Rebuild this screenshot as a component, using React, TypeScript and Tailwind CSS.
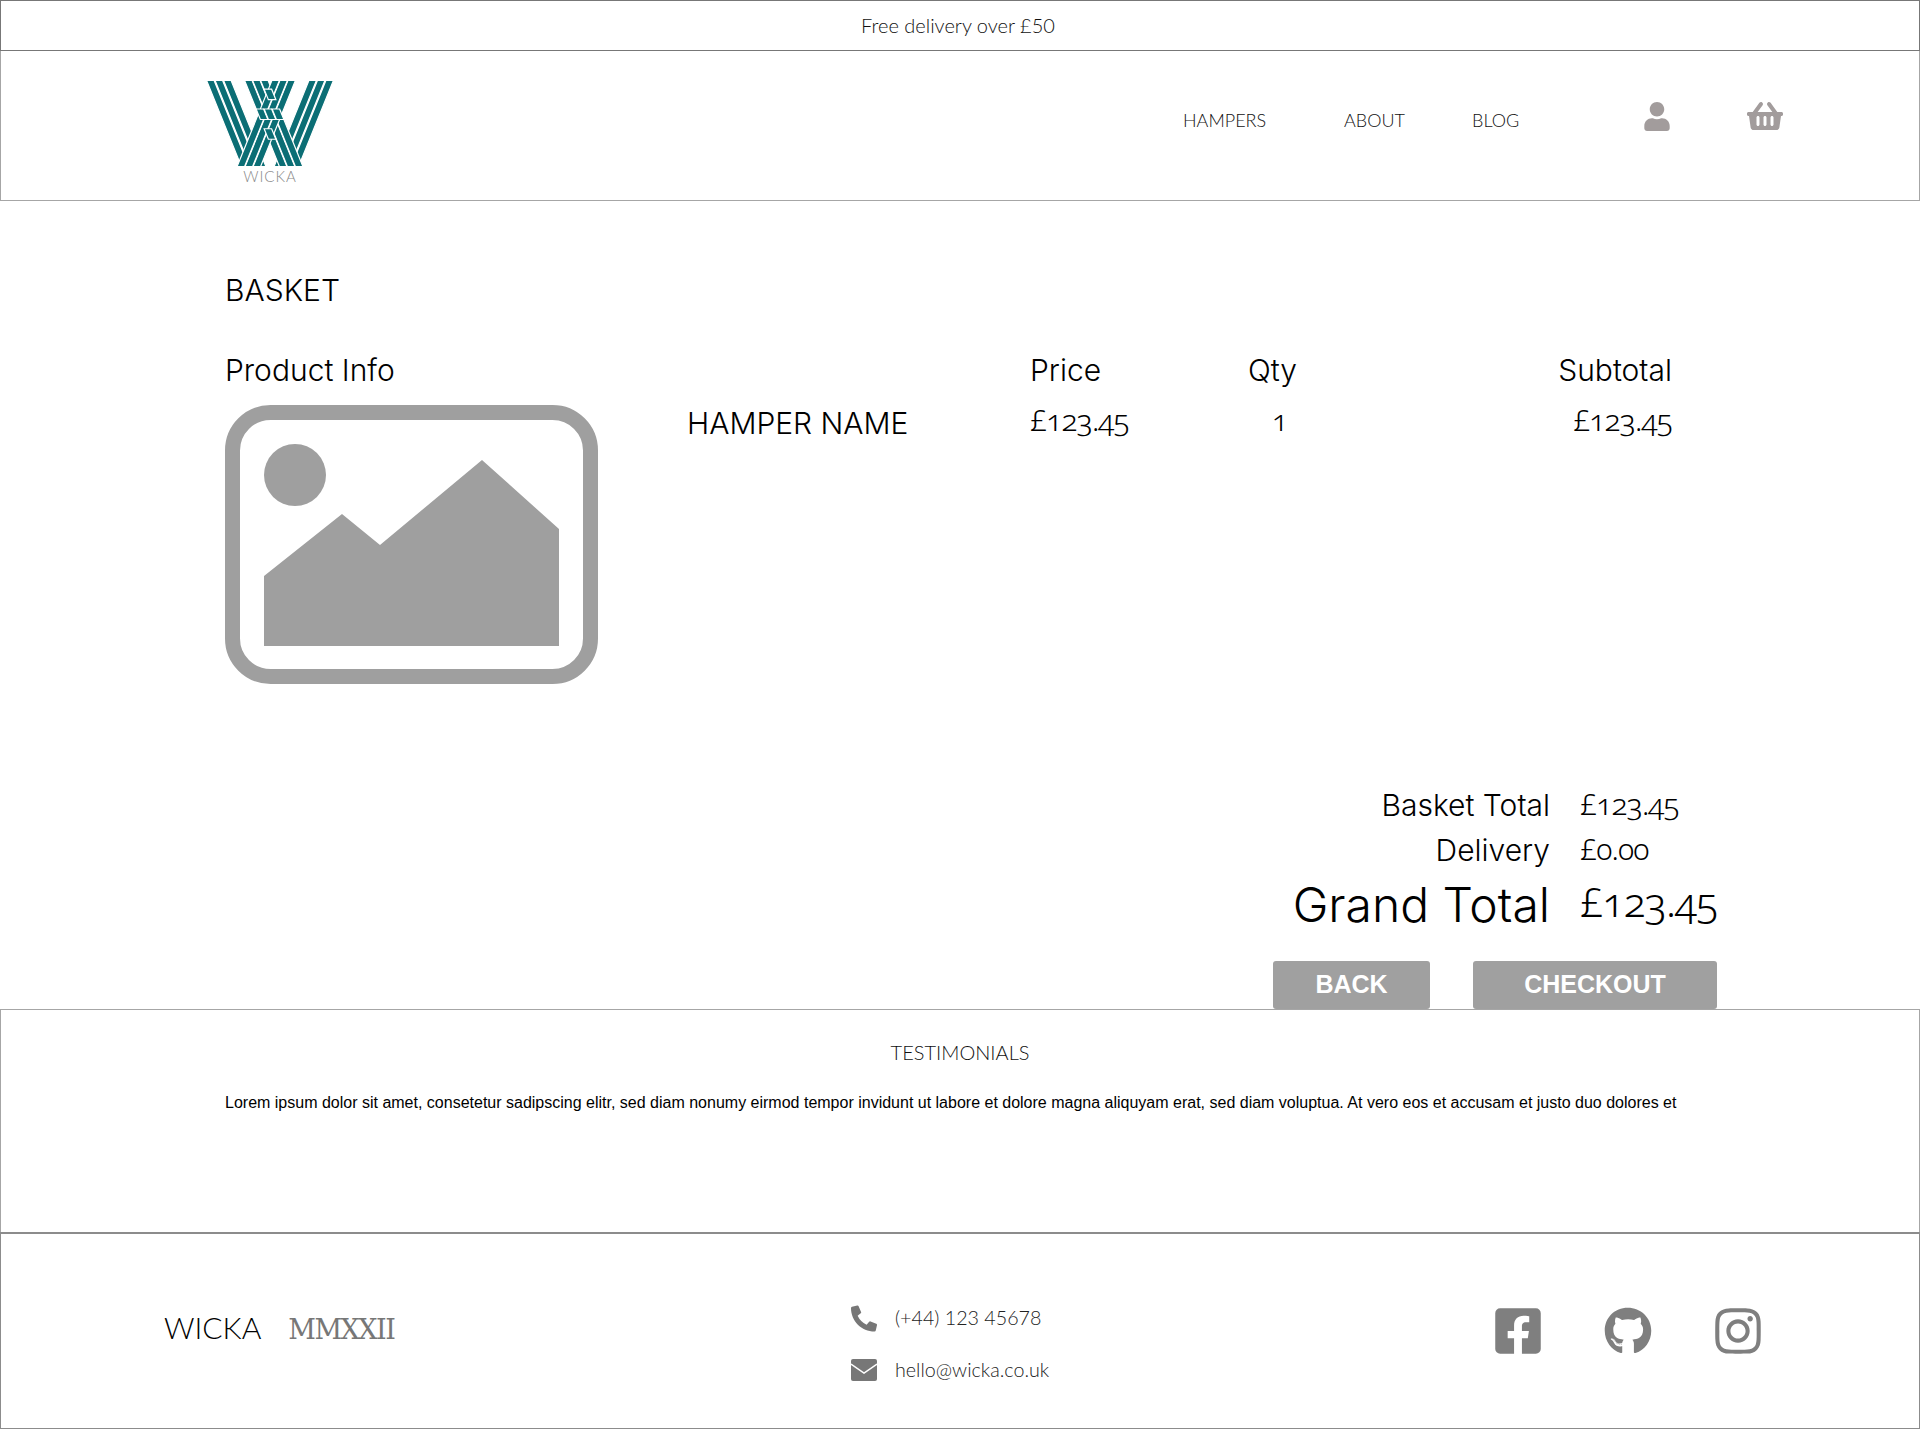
import { FaFacebookSquare, FaGithub, FaInstagram, FaPhoneAlt, FaShoppingBasket, FaUser } from 'react-icons/fa';

const display = "font-['Inter',sans-serif] font-light";
const money = "-translate-y-[2px] font-['Noto_Sans',sans-serif] font-light oldstyle-nums tracking-[-0.9px]";
const lato = "font-['Lato',sans-serif] font-light";

// top edge x of each stripe, the bands mirror around x = 64
const bandA = [0, 8.5, 17];
const bandB = [38, 46, 54];
const stripeW = 7.5;
const slope = 36 / 89;

const Stripe = ({ x, dir, from = -2, to = 87 }: { x: number; dir: 1 | -1; from?: number; to?: number }) => {
  const startX = dir === 1 ? x : 128 - x - stripeW;
  const at = (y: number) => startX + slope * dir * (y + 2);
  const points = `${at(from)},${from} ${at(from) + stripeW},${from} ${at(to) + stripeW},${to} ${at(to)},${to}`;
  return <polygon points={points} fill="#0b6e75" stroke="#ffffff" strokeWidth="1.2" />;
};

// the middle bands weave: every other crossing goes back on top
const weave = bandB.flatMap((a, i) =>
  bandB
    .filter((_, j) => (i + j) % 2 === 0)
    .map((b) => {
      const y = (128 - a - b - stripeW) / (2 * slope) - 2;
      return { x: a, from: y - 5.25, to: y + 5.25 };
    }),
);

const Logo = () => (
  <div className="flex w-[128px] flex-col items-center">
    <svg width="128" height="85" viewBox="0 0 128 85" className="overflow-hidden">
      {bandA.map((x) => (
        <Stripe key={`a${x}`} x={x} dir={1} />
      ))}
      {bandA.map((x) => (
        <Stripe key={`d${x}`} x={x} dir={-1} />
      ))}
      {bandB.map((x) => (
        <Stripe key={`b${x}`} x={x} dir={1} />
      ))}
      {bandB.map((x) => (
        <Stripe key={`c${x}`} x={x} dir={-1} />
      ))}
      {weave.map((s) => (
        <Stripe key={`w${s.x}-${s.from}`} x={s.x} dir={1} from={s.from} to={s.to} />
      ))}
    </svg>
    <span className={`${lato} mt-[1px] text-[15px] leading-[18px] tracking-[1px] text-[#888888]`}>WICKA</span>
  </div>
);

const ImagePlaceholder = () => (
  <svg width="373" height="279" viewBox="0 0 373 279">
    <rect x="7.5" y="7.5" width="358" height="264" rx="38" fill="none" stroke="#9f9f9f" strokeWidth="15" />
    <circle cx="70" cy="70" r="31" fill="#9f9f9f" />
    <polygon points="39,171 117,109 155,140 257,55 334,124 334,241 39,241" fill="#9f9f9f" />
  </svg>
);

const MailIcon = () => (
  <svg width="26" height="22" viewBox="0 0 26 22">
    <rect width="26" height="22" rx="2" fill="#777777" />
    <polyline points="0,5 13,14 26,5" fill="none" stroke="#ffffff" strokeWidth="1.5" />
  </svg>
);

const App = () => {
  return (
    <div className="flex h-[1429px] w-[1920px] flex-col overflow-hidden bg-white text-black">
      <div className={`${lato} flex h-[51px] items-center justify-center border border-[#777777] pb-[2px] pr-[4px] text-[20px] text-[#111111]`}>
        Free delivery over £50
      </div>

      <header className="flex h-[150px] items-start border-x border-b border-[#a6a6a6] pl-[205px]">
        <div className="mt-[30px]">
          <Logo />
        </div>
        <nav className={`${lato} ml-[849px] mt-[57px] flex text-[18px] leading-[24px] text-[#111111]`}>
          <a className="w-[161px]">HAMPERS</a>
          <a className="w-[128px]">ABOUT</a>
          <a className="w-[172px]">BLOG</a>
        </nav>
        <div className="mt-[49px] flex items-center text-[#a29c9c]">
          <FaUser className="h-[29px] w-[26px]" />
          <FaShoppingBasket className="ml-[75px] h-[32px] w-[40px]" />
        </div>
      </header>

      <main className="flex h-[808px] flex-col pl-[225px] pr-[203px] pt-[71px]">
        <h1 className={`${display} text-[30px] leading-[36px]`}>BASKET</h1>

        <div className={`${display} mt-[44px] grid grid-cols-[462px_343px_218px_200px_224px] text-[30px] leading-[36px]`}>
          <div>Product Info</div>
          <div />
          <div>Price</div>
          <div>Qty</div>
          <div className="text-right">Subtotal</div>

          <div className="mt-[17px]">
            <ImagePlaceholder />
          </div>
          <div className="mt-[17px] whitespace-nowrap">HAMPER NAME</div>
          <div className={`${money} mt-[16px]`}>£123.45</div>
          <div className={`${money} mt-[16px] pl-[24px]`}>1</div>
          <div className={`${money} mt-[16px] text-right`}>£123.45</div>
        </div>

        <div className={`${display} mt-[99px] grid grid-cols-[auto_137px] justify-end gap-x-[30px] text-[30px] leading-[45px]`}>
          <div className="text-right">Basket Total</div>
          <div className={money}>£123.45</div>
          <div className="text-right">Delivery</div>
          <div className={money}>£0.00</div>
          <div className="text-right text-[48px] leading-[64px]">Grand Total</div>
          <div className={`${money} whitespace-nowrap text-[41px] leading-[60px] tracking-[-0.8px]`}>£123.45</div>
        </div>

        <div className="mt-[24px] flex justify-end gap-[43px] font-['Liberation_Sans',sans-serif] text-[25px] font-bold text-white">
          <button className="h-[48px] w-[157px] rounded-[3px] bg-[#a0a0a0]">BACK</button>
          <button className="h-[48px] w-[244px] rounded-[3px] bg-[#a0a0a0]">CHECKOUT</button>
        </div>
      </main>

      <section className="flex h-[223px] flex-col border-x border-t border-[#a6a6a6] pl-[224px]">
        <h2 className={`${lato} mt-[28px] pr-[224px] text-center text-[20px] leading-[28px] text-[#111111]`}>TESTIMONIALS</h2>
        <p className="mt-[26px] font-['Liberation_Sans',sans-serif] text-[16px] leading-[22px] whitespace-nowrap">
          Lorem ipsum dolor sit amet, consetetur sadipscing elitr, sed diam nonumy eirmod tempor invidunt ut labore et dolore magna aliquyam erat, sed diam voluptua. At vero eos et accusam et justo duo dolores et
        </p>
      </section>

      <footer className="flex h-[197px] items-center border border-t-2 border-[#8c8c8c] pl-[163px]">
        <div className="-mt-[6px] flex w-[687px] items-baseline">
          <span className={`${lato} text-[30px]`}>WICKA</span>
          <span className="ml-[27px] font-['DejaVu_Serif',serif] text-[27px] tracking-[-1.5px] text-[#777777]">MMXXII</span>
        </div>

        <div className={`${lato} mt-[26px] flex w-[644px] flex-col gap-[24px] text-[19.7px] leading-[28px] text-[#222222]`}>
          <div className="flex items-center">
            <FaPhoneAlt className="h-[27px] w-[26px] text-[#777777]" />
            <span className="ml-[18px]">(+44) 123 45678</span>
          </div>
          <div className="flex items-center">
            <MailIcon />
            <span className="ml-[18px]">hello@wicka.co.uk</span>
          </div>
        </div>

        <div className="flex items-center gap-[63px] text-[#7f7f7f]">
          <FaFacebookSquare className="h-[52px] w-[46px]" />
          <FaGithub className="h-[48px] w-[48px]" />
          <FaInstagram className="h-[52px] w-[46px]" />
        </div>
      </footer>
    </div>
  );
};

export default App;
